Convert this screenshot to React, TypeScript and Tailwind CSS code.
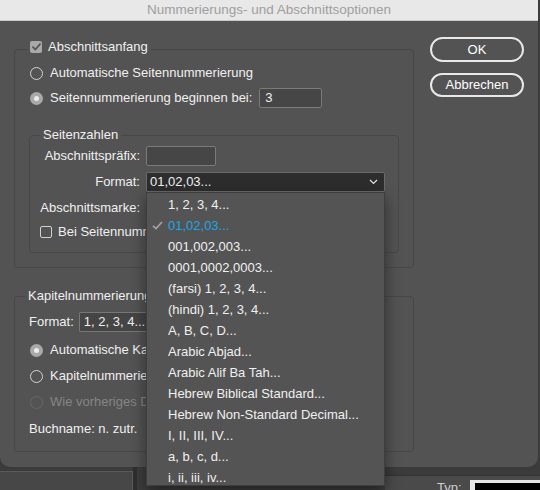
import React from 'react';
import clsx from 'clsx';

const formats = [
  '1, 2, 3, 4...',
  '01,02,03...',
  '001,002,003...',
  '0001,0002,0003...',
  '(farsi) 1, 2, 3, 4...',
  '(hindi) 1, 2, 3, 4...',
  'A, B, C, D...',
  'Arabic Abjad...',
  'Arabic Alif Ba Tah...',
  'Hebrew Biblical Standard...',
  'Hebrew Non-Standard Decimal...',
  'I, II, III, IV...',
  'a, b, c, d...',
  'i, ii, iii, iv...',
];

const Radio = ({ checked, disabled }: { checked?: boolean; disabled?: boolean }) =>
  checked ? (
    <span className="flex h-[13px] w-[13px] shrink-0 items-center justify-center rounded-full bg-[#a9a9a9]">
      <span className="h-[5px] w-[5px] rounded-full bg-[#ececec]" />
    </span>
  ) : (
    <span
      className={clsx(
        'h-[13px] w-[13px] shrink-0 rounded-full border',
        disabled ? 'border-[#686868]' : 'border-[#d4d4d4]'
      )}
    />
  );

const Check = ({ checked }: { checked?: boolean }) =>
  checked ? (
    <span className="flex h-[12px] w-[12px] shrink-0 items-center justify-center rounded-[2px] bg-[#a9a9a9]">
      <svg width="9" height="8" viewBox="0 0 9 8" fill="none">
        <path d="M1 4.2 3.4 6.5 8 1.2" stroke="#555" strokeWidth="1.8" strokeLinecap="round" strokeLinejoin="round" />
      </svg>
    </span>
  ) : (
    <span className="h-[12px] w-[12px] shrink-0 rounded-[2px] border border-[#cfcfcf]" />
  );

// group box with its caption sitting on the top border
const Group = ({ title, className, children }: { title: React.ReactNode; className?: string; children: React.ReactNode }) => (
  <div className={clsx('rounded-[4px] border border-[#474747]', className)}>
    {title}
    {children}
  </div>
);

export default function App() {
  return (
    <div className="relative h-[490px] w-[540px] overflow-hidden bg-[#3b3b3b] font-['Liberation_Sans',Arial,sans-serif] text-[13px] leading-4 text-[#f0f0f0]">
      {/* window title */}
      <div className="flex h-[21px] w-[538px] items-center justify-center border-b border-[#c9c9c9] bg-[#e8e8e8] text-[13.5px] text-[#9e9e9e]">
        Nummerierungs- und Abschnittsoptionen
      </div>

      {/* dialog body */}
      <div className="flex h-[446px] w-[538px] rounded-b-[10px] bg-[#535353] pl-[14px]">
        <div className="w-[400px]">
          <Group
            className="mt-[28px] pb-[14px]"
            title={
              <div className="-mt-[11px] ml-[12px] flex h-4 w-fit items-center gap-[6px] bg-[#535353] px-[3px]">
                <Check checked />
                <span>Abschnittsanfang</span>
              </div>
            }
          >
            <div className="mt-[9px] flex h-[18px] items-center gap-[7px] pl-[15px]">
              <Radio />
              <span>Automatische Seitennummerierung</span>
            </div>
            <div className="mt-[6px] flex h-5 items-center gap-[7px] pl-[15px]">
              <Radio checked />
              <span>Seitennummerierung beginnen bei:</span>
              <div className="flex h-5 w-[63px] items-center rounded-[2px] border border-[#7a7a7a] bg-[#464646] px-[5px]">3</div>
            </div>

            <Group
              className="ml-[14px] mt-[27px] w-[370px] pb-[12px]"
              title={
                <div className="-mt-[9px] ml-[10px] flex h-4 w-fit items-center bg-[#535353] px-[3px]">Seitenzahlen</div>
              }
            >
              <div className="mt-[3px] flex h-5 items-center">
                <span className="w-[110px] text-right">Abschnittspräfix:</span>
                <div className="ml-[6px] h-5 w-[70px] rounded-[2px] border border-[#7a7a7a] bg-[#464646]" />
              </div>
              <div className="mt-[6px] flex h-5 items-center">
                <span className="w-[110px] text-right">Format:</span>
                <div className="relative ml-[6px] flex h-5 w-[239px] items-center justify-between rounded-[2px] border border-[#6a6a6a] bg-[#2d2d2d] pl-[3px] pr-[6px]">
                  <span>01,02,03...</span>
                  <svg width="9" height="6" viewBox="0 0 9 6" fill="none">
                    <path d="M1 1l3.5 3.5L8 1" stroke="#e6e6e6" strokeWidth="1.2" />
                  </svg>

                  {/* open format list */}
                  <div className="absolute left-[-1px] top-[19px] z-10 h-[294px] w-[239px] overflow-hidden border border-[#3e3e3e] bg-[#545454] pt-[1px] shadow-[0_6px_14px_rgba(0,0,0,0.45)]">
                    {formats.map((f, i) => (
                      <div key={f} className="relative flex h-[21px] items-center pl-[21px]">
                        {i === 1 && (
                          <svg className="absolute left-[5px] top-[6px]" width="11" height="9" viewBox="0 0 11 9" fill="none">
                            <path d="M1 4.8 4 7.6 10 1" stroke="#a3a3a3" strokeWidth="1.7" />
                          </svg>
                        )}
                        <span className={i === 1 ? 'text-[#1ba6e8]' : ''}>{f}</span>
                      </div>
                    ))}
                  </div>
                </div>
              </div>
              <div className="mt-[6px] flex h-5 items-center">
                <span className="w-[110px] text-right">Abschnittsmarke:</span>
              </div>
              <div className="mt-[6px] flex h-4 items-center gap-[6px] pl-[10px]">
                <Check />
                <span className="w-[88px] overflow-hidden whitespace-nowrap">Bei Seitennummerierung einschließen</span>
              </div>
            </Group>
          </Group>

          <Group
            className="mt-[28px] pb-[13px]"
            title={
              <div className="-mt-[9px] ml-[10px] flex h-4 w-[121px] items-center overflow-hidden whitespace-nowrap bg-[#535353] pl-[3px]">
                Kapitelnummerierung
              </div>
            }
          >
            <div className="mt-[8px] flex h-5 items-center pl-[14px]">
              <span>Format:</span>
              <div className="ml-[5px] flex h-5 w-[68px] items-center overflow-hidden whitespace-nowrap rounded-l-[2px] border-y border-l border-[#777] bg-[#454545] px-[4px]">
                1, 2, 3, 4...
              </div>
            </div>
            <div className="mt-[9px] flex h-[18px] items-center gap-[7px] pl-[15px]">
              <Radio checked />
              <span className="w-[96px] overflow-hidden whitespace-nowrap">Automatische Kapitelnummerierung</span>
            </div>
            <div className="mt-[8px] flex h-[18px] items-center gap-[7px] pl-[15px]">
              <Radio />
              <span className="w-[96px] overflow-hidden whitespace-nowrap">Kapitelnummerierung beginnen bei:</span>
            </div>
            <div className="mt-[8px] flex h-[18px] items-center gap-[7px] pl-[15px] text-[#858585]">
              <Radio disabled />
              <span className="w-[96px] overflow-hidden whitespace-nowrap">Wie vorheriges Dokument im Buch</span>
            </div>
            <div className="mt-[9px] flex h-[18px] items-center pl-[14px]">Buchname: n. zutr.</div>
          </Group>
        </div>

        <div className="ml-[16px] mt-[16px] flex w-[94px] flex-col">
          <button className="h-[25px] rounded-full border-2 border-[#e8e8e8] text-white">OK</button>
          <button className="mt-[11px] h-[24px] rounded-full border-2 border-[#e8e8e8] text-white">Abbrechen</button>
        </div>
      </div>

      {/* application panels behind the dialog */}
      <div className="flex h-[23px]">
        <div className="mt-[4px] w-[133px] border-t border-r border-[#5a5a5a] bg-[#474747]" />
        <div className="w-[4px] bg-[#2f2f2f]" />
        <div className="w-[248px] bg-[#3d3d3d]" />
        <div className="mt-[8px] flex flex-1 items-start border-t border-[#333] bg-[#4a4a4a]">
          <span className="ml-[52px] mt-[4px] text-[#cfcfcf]">Typ:</span>
          <div className="ml-[8px] mt-[4px] flex-1 bg-[#e6e6e6] pl-[5px] pt-[3px]">
            <div className="h-[10px] bg-black" />
          </div>
        </div>
      </div>
    </div>
  );
}
